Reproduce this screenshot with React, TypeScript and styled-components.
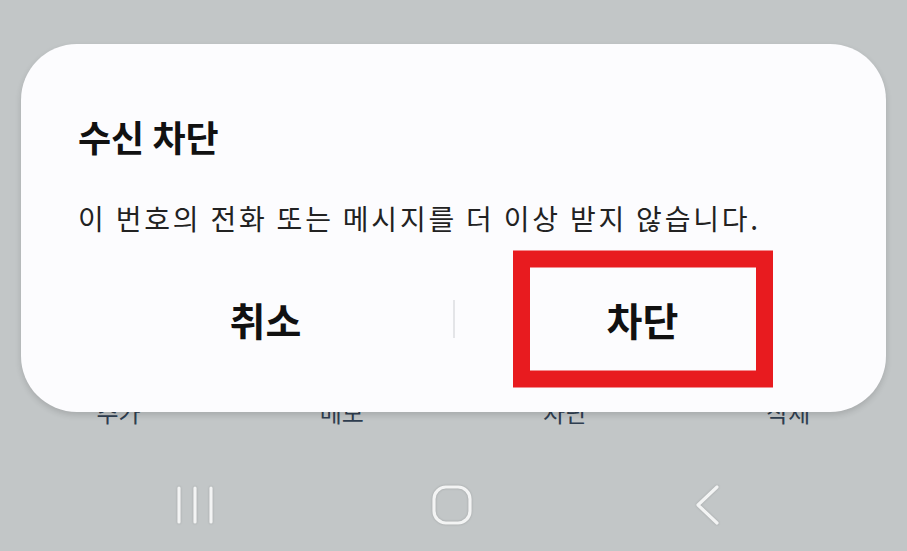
import React from 'react';
import styled, { createGlobalStyle } from 'styled-components';

const GlobalStyle = createGlobalStyle`
  html, body {
    margin: 0;
    padding: 0;
    background: #c2c6c7;
  }
  body {
    font-family: "Noto Sans CJK KR", "Noto Sans", sans-serif;
  }
`;

const Screen = styled.div`
  position: relative;
  width: 907px;
  height: 551px;
  overflow: hidden;
  background: #c2c6c7;
  display: flex;
  flex-direction: column;
`;

const Content = styled.div`
  flex: 1;
`;

const ActionRow = styled.div`
  display: grid;
  grid-template-columns: repeat(4, 1fr);
  padding: 0 7px 32px;
`;

const ActionLabel = styled.span`
  text-align: center;
  font-size: 24px;
  line-height: 30px;
  color: #2f3e50;
`;

const NavBar = styled.div`
  height: 92px;
  display: grid;
  grid-template-columns: repeat(3, 1fr);
  align-items: center;
  padding: 0 74px;
`;

const NavSlot = styled.div<{ $shift?: number }>`
  display: flex;
  justify-content: center;
  transform: translateX(${(p) => p.$shift ?? 0}px);
`;

const NavIcon = styled.svg`
  display: block;
  filter: drop-shadow(0 0 1px rgba(0, 0, 0, 0.18));
`;

const Dialog = styled.div`
  position: absolute;
  top: 44px;
  left: 21px;
  width: 865px;
  height: 368px;
  box-sizing: border-box;
  padding: 68px 56px 0 57px;
  border-radius: 56px;
  background: #fcfcfe;
  box-shadow: 0 3px 6px rgba(0, 0, 0, 0.14);
  display: flex;
  flex-direction: column;
`;

const Title = styled.h2`
  margin: 0;
  font-size: 36px;
  line-height: 48px;
  font-weight: 700;
  color: #111;
`;

const Message = styled.p`
  margin: 40px 0 0;
  font-size: 28px;
  line-height: 36px;
  letter-spacing: 2.8px;
  color: #222;
  white-space: nowrap;
`;

const ButtonRow = styled.div`
  margin-top: 43px;
  display: flex;
  align-items: center;
`;

const DialogButton = styled.button`
  position: relative;
  flex: 1;
  height: 80px;
  border: none;
  background: transparent;
  padding: 0;
  font-family: inherit;
  font-size: 39px;
  font-weight: 700;
  color: #111;
`;

const Divider = styled.span`
  width: 2px;
  height: 38px;
  background: #e4e5e8;
`;

const Highlight = styled.span`
  position: absolute;
  left: 50%;
  top: 50%;
  width: 260px;
  height: 137px;
  box-sizing: border-box;
  transform: translate(-50%, -50%);
  border: 17px solid #e81b1f;
  pointer-events: none;
`;

const navColor = '#f3f4f4';

export default function App() {
  return (
    <>
      <GlobalStyle />
      <Screen>
        <Content />
        <ActionRow>
          <ActionLabel>추가</ActionLabel>
          <ActionLabel>메모</ActionLabel>
          <ActionLabel>차단</ActionLabel>
          <ActionLabel>삭제</ActionLabel>
        </ActionRow>
        <NavBar>
          <NavSlot $shift={-6}>
            <NavIcon width="40" height="40" viewBox="0 0 40 40">
              <g stroke={navColor} strokeWidth="3.2" strokeLinecap="round">
                <line x1="4" y1="3" x2="4" y2="37" />
                <line x1="20" y1="3" x2="20" y2="37" />
                <line x1="36" y1="3" x2="36" y2="37" />
              </g>
            </NavIcon>
          </NavSlot>
          <NavSlot $shift={-2}>
            <NavIcon width="40" height="40" viewBox="0 0 40 40">
              <rect x="2" y="2" width="36" height="36" rx="12" fill="none" stroke={navColor} strokeWidth="3.2" />
            </NavIcon>
          </NavSlot>
          <NavSlot>
            <NavIcon width="28" height="42" viewBox="0 0 28 42">
              <polyline points="24,3 5,21 24,39" fill="none" stroke={navColor} strokeWidth="3.2" strokeLinecap="round" strokeLinejoin="round" />
            </NavIcon>
          </NavSlot>
        </NavBar>

        <Dialog>
          <Title>수신 차단</Title>
          <Message>이 번호의 전화 또는 메시지를 더 이상 받지 않습니다.</Message>
          <ButtonRow>
            <DialogButton>취소</DialogButton>
            <Divider />
            <DialogButton>
              차단
              <Highlight />
            </DialogButton>
          </ButtonRow>
        </Dialog>
      </Screen>
    </>
  );
}
